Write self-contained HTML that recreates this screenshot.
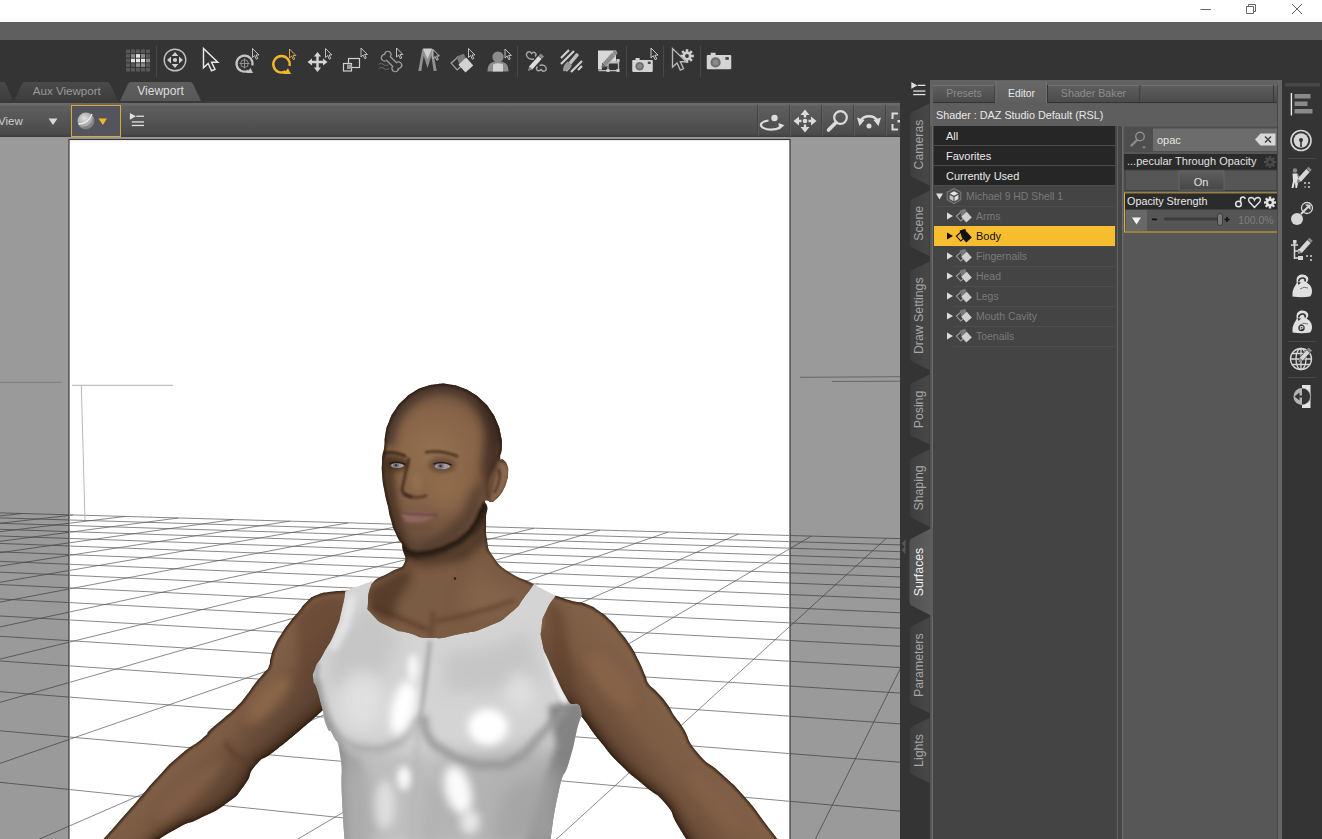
<!DOCTYPE html>
<html><head><meta charset="utf-8"><title>DAZ Studio</title>
<style>
*{box-sizing:border-box;margin:0;padding:0}
html,body{width:1322px;height:839px;overflow:hidden;background:#343434;font-family:"Liberation Sans",sans-serif;font-size:11px;color:#ddd}
.abs{position:absolute}
#titlebar{left:0;top:0;width:1322px;height:22px;background:#fff}
#menuband{left:0;top:22px;width:1322px;height:18px;background:#5f5f5f}
#toolbar{left:0;top:40px;width:1322px;height:61px;background:#343434}
#vp{left:0;top:101px;width:900px;height:738px;background:#9a9a9a;overflow:hidden}
#vptool{left:0;top:0;width:900px;height:36px;background:linear-gradient(#3a3a3a 0,#3a3a3a 1.8px,#6a6a6a 2.4px,#666 4.5px,#5e5e5e 5.5px,#4b4b4b 33px,#3e3e3e 35.5px,#3e3e3e 36px)}
#tabsrow{left:0;top:81px;width:900px;height:20px;overflow:hidden}
#rightdark{left:900px;top:80px;width:30px;height:759px;background:#343434;overflow:visible;z-index:3}
#panel{left:929px;top:80px;width:353px;height:759px;background:#666}
#rtool{left:1282px;top:80px;width:40px;height:759px;background:#343434}
.vt{position:absolute;transform-origin:0 0;transform:rotate(-90deg);font-size:11px;color:#aaa;white-space:nowrap;letter-spacing:.4px}
.row{position:absolute;left:934px;width:181px;height:19px;line-height:19px;background:#262626;color:#e6e6e6;padding-left:12px;font-size:11px}
.trow{position:absolute;left:934px;width:181px;height:20px;line-height:20px;color:#7c7c7c;font-size:11px;border-bottom:1px solid #555}
</style></head><body>
<div id="titlebar" class="abs"><svg class="abs" style="left:1180px;top:0" width="142" height="22" viewBox="1180 0 142 22" fill="none" stroke="#666" stroke-width="1"><path d="M1200.5 9.5H1211"/><path d="M1246.5 6.5h7v7h-7z M1248.5 6.5v-2h7v7h-2"/><path d="M1292 4l10 10M1302 4l-10 10"/></svg></div>
<div id="menuband" class="abs"></div>
<div id="toolbar" class="abs"><svg class="abs" style="left:0;top:0" width="760" height="61" viewBox="0 40 760 61"><rect x="126.0" y="49.5" width="4" height="3.6" fill="#585858"/><rect x="131.0" y="49.5" width="4" height="3.6" fill="#585858"/><rect x="136.0" y="49.5" width="4" height="3.6" fill="#585858"/><rect x="141.0" y="49.5" width="4" height="3.6" fill="#585858"/><rect x="146.0" y="49.5" width="4" height="3.6" fill="#585858"/><rect x="126.0" y="54.1" width="4" height="3.6" fill="#585858"/><rect x="131.0" y="54.1" width="4" height="3.6" fill="#8a8a8a"/><rect x="136.0" y="54.1" width="4" height="3.6" fill="#e4e4e4"/><rect x="141.0" y="54.1" width="4" height="3.6" fill="#8a8a8a"/><rect x="146.0" y="54.1" width="4" height="3.6" fill="#585858"/><rect x="126.0" y="58.7" width="4" height="3.6" fill="#585858"/><rect x="131.0" y="58.7" width="4" height="3.6" fill="#e4e4e4"/><rect x="136.0" y="58.7" width="4" height="3.6" fill="#e4e4e4"/><rect x="141.0" y="58.7" width="4" height="3.6" fill="#e4e4e4"/><rect x="146.0" y="58.7" width="4" height="3.6" fill="#8a8a8a"/><rect x="126.0" y="63.3" width="4" height="3.6" fill="#585858"/><rect x="131.0" y="63.3" width="4" height="3.6" fill="#585858"/><rect x="136.0" y="63.3" width="4" height="3.6" fill="#8a8a8a"/><rect x="141.0" y="63.3" width="4" height="3.6" fill="#8a8a8a"/><rect x="146.0" y="63.3" width="4" height="3.6" fill="#585858"/><rect x="126.0" y="67.9" width="4" height="3.6" fill="#585858"/><rect x="131.0" y="67.9" width="4" height="3.6" fill="#585858"/><rect x="136.0" y="67.9" width="4" height="3.6" fill="#585858"/><rect x="141.0" y="67.9" width="4" height="3.6" fill="#585858"/><rect x="146.0" y="67.9" width="4" height="3.6" fill="#585858"/><line x1="156.5" y1="46" x2="156.5" y2="77" stroke="#484848"/><line x1="517.5" y1="46" x2="517.5" y2="77" stroke="#484848"/><line x1="626.5" y1="46" x2="626.5" y2="77" stroke="#484848"/><line x1="663.5" y1="46" x2="663.5" y2="77" stroke="#484848"/><line x1="700.5" y1="46" x2="700.5" y2="77" stroke="#484848"/><g transform="translate(175 60)" fill="#d0d0d0"><circle r="10.8" fill="none" stroke="#c0c0c0" stroke-width="1.4"/><circle r="2.1"/><path d="M0 -8L3.4 -4H-3.4Z M0 8L3.4 4H-3.4Z M-8 0L-4 -3.4V3.4Z M8 0L4 -3.4V3.4Z"/></g><g transform="translate(203.5 48.5) scale(1.55)"><path d="M0 0 L0 12.5 L3 9.6 L5.2 14.4 L7.4 13.4 L5.2 8.8 L9.2 8.8 Z" fill="#343434" stroke="#e6e6e6" stroke-width=".95"/></g><g transform="translate(244.5 63.5)" fill="none" stroke="#c4c4c4"><path d="M3.8 7.2A8 8 0 1 1 7.8 2" stroke-width="2.2"/><path d="M1.5 9.5L8.500 9.5L6 4.5Z" fill="#c4c4c4" stroke="none"/><circle r="3.8" stroke-width=".9" stroke="#9a9a9a"/><path d="M0 -5V5M-5 0H5" stroke-width=".9" stroke="#9a9a9a"/></g><g transform="translate(252.5 48.5) scale(0.82)"><path d="M0 0 L0 11 L2.6 8.6 L4.6 13 L6.4 12.2 L4.4 7.9 L7.8 7.9 Z" fill="#343434" stroke="#ddd" stroke-width="1" stroke-linejoin="miter"/></g><g transform="translate(281.5 64)" fill="none" stroke="#f2b62c"><path d="M4 7.400A8.2 8.2 0 1 1 8 2" stroke-width="2.4"/><path d="M1.500 10L9.500 10L6.500 4.300Z" fill="#f2b62c" stroke="none"/></g><g transform="translate(289.5 49) scale(0.82)"><path d="M0 0 L0 11 L2.6 8.6 L4.6 13 L6.4 12.2 L4.4 7.9 L7.8 7.9 Z" fill="#343434" stroke="#f0c050" stroke-width="1" stroke-linejoin="miter"/></g><g transform="translate(317.5 62)" fill="#d6d6d6"><path d="M-1.2 -6H1.2V6H-1.2Z M-6 -1.2H6V1.2H-6Z"/><path d="M0 -10L3.600 -5.500H-3.600Z M0 10L3.600 5.500H-3.600Z M-10 0L-5.500 -3.600V3.600Z M10 0L5.500 -3.600V3.600Z"/></g><g transform="translate(325.5 48.5) scale(0.82)"><path d="M0 0 L0 11 L2.6 8.6 L4.6 13 L6.4 12.2 L4.4 7.9 L7.8 7.9 Z" fill="#343434" stroke="#ddd" stroke-width="1" stroke-linejoin="miter"/></g><g fill="none" stroke="#d0d0d0" stroke-width="1.2"><rect x="348.5" y="58.5" width="11" height="9"/><rect x="343.5" y="63.5" width="8" height="7.5" fill="#343434"/><rect x="347" y="64.5" width="4.5" height="4.5" fill="#9a9a9a" stroke="none"/></g><g transform="translate(361 48) scale(0.82)"><path d="M0 0 L0 11 L2.6 8.6 L4.6 13 L6.4 12.2 L4.4 7.9 L7.8 7.9 Z" fill="#343434" stroke="#ddd" stroke-width="1" stroke-linejoin="miter"/></g><g transform="translate(391.500 61.500) rotate(45)"><g fill="none" stroke="#9c9c9c" stroke-width="2.600"><circle cx="-7.500" cy="-2.300" r="2.600"/><circle cx="-7.500" cy="2.300" r="2.600"/><circle cx="7.500" cy="-2.300" r="2.600"/><circle cx="7.500" cy="2.300" r="2.600"/><rect x="-7" y="-2" width="14" height="4"/></g><g fill="#343434"><circle cx="-7.500" cy="-2.300" r="2.600"/><circle cx="-7.500" cy="2.300" r="2.600"/><circle cx="7.500" cy="-2.300" r="2.600"/><circle cx="7.500" cy="2.300" r="2.600"/><rect x="-7" y="-2" width="14" height="4"/></g></g><path d="M378.500 64.500q2.500 -2 5 0t5 0M379 68.500q2.500 -2 5 0t5 0" fill="none" stroke="#606060" stroke-width="1.100"/><g transform="translate(396.5 48) scale(0.82)"><path d="M0 0 L0 11 L2.6 8.6 L4.6 13 L6.4 12.2 L4.4 7.9 L7.8 7.9 Z" fill="#343434" stroke="#ddd" stroke-width="1" stroke-linejoin="miter"/></g><path d="M418.300 71L422.300 49H424.800L427.500 60L430.200 49H432.700L436.700 71H433.700L431.300 56L427.500 68L423.700 56L421.300 71Z" fill="#909090"/><path d="M423 48.500H432L427.500 59.500Z" fill="#cdcdcd"/><g transform="translate(433 49.5) scale(0.82)"><path d="M0 0 L0 11 L2.6 8.6 L4.6 13 L6.4 12.2 L4.4 7.9 L7.8 7.9 Z" fill="#343434" stroke="#ddd" stroke-width="1" stroke-linejoin="miter"/></g><g transform="translate(462 63)"><rect x="-9" y="-4" width="9" height="9" transform="rotate(-42 -4.5 .5)" fill="#343434" stroke="#a0a0a0" stroke-width="1.3"/><rect x="-3" y="-8" width="8" height="8" transform="rotate(-20)" fill="#7c7c7c"/><rect x="-1.500" y="-3" width="10.5" height="10.5" transform="rotate(-42 3.5 2)" fill="#d2d2d2"/></g><g transform="translate(468.5 48.5) scale(0.82)"><path d="M0 0 L0 11 L2.6 8.6 L4.6 13 L6.4 12.2 L4.4 7.9 L7.8 7.9 Z" fill="#343434" stroke="#ddd" stroke-width="1" stroke-linejoin="miter"/></g><g transform="translate(498 62)"><circle cx="0" cy="-5" r="5.6" fill="#8c8c8c"/><path d="M-10.500 9.500C-10.500 1 -6 -.5 0 -.5C6 -.5 10.500 1 10.500 9.500Z" fill="#8c8c8c"/><path d="M-5 9.500V2.500Q0 0 5 2.500V9.500Z" fill="#d2d2d2"/></g><g transform="translate(505 49) scale(0.82)"><path d="M0 0 L0 11 L2.6 8.6 L4.6 13 L6.4 12.2 L4.4 7.9 L7.8 7.9 Z" fill="#343434" stroke="#ddd" stroke-width="1" stroke-linejoin="miter"/></g><g transform="translate(536 62)" fill="none" stroke="#a8a8a8" stroke-width="1.4"><path d="M-9 -5.500C-11 -10 -6 -11.500 -4.500 -8.500C-1.500 -11.500 1.500 -8 -1 -5.500M9.500 4.500C12 9 7 10.500 5 7.500C2 10.500 -1 7.500 1.500 4.500"/><path d="M-9 -5.500Q-7 -2 -2 -3M9.500 4.500Q7 2 3.500 3.500"/></g><g transform="translate(536 62) rotate(-48)"><rect x="-8" y="-2.200" width="14" height="4.400" fill="#dcdcdc"/><path d="M-8 -2.200L-12 0L-8 2.200Z" fill="#8a8a8a"/><rect x="6.500" y="-2.200" width="3" height="4.400" fill="#8a8a8a"/></g><g stroke="#cfcfcf" stroke-width="2.200"><path d="M561 58L569 50M561 64L574 51M578 70L582 66M571 72L582 61M566 71L570 67"/></g><g transform="translate(571 62) rotate(-50)"><path d="M-2 -1.800H10Q12 0 10 1.800H-2Z" fill="#bdbdbd"/><path d="M-2 -3Q-9 -4 -12 0Q-9 4 -2 3Z" fill="#9a9a9a"/></g><g><rect x="598" y="50.500" width="18" height="19" fill="#d8d8d8"/><path d="M598.500 70.500H618.500V60M608 70.500V62H618.500" fill="none" stroke="#bdbdbd" stroke-width="1.300"/><rect x="602" y="63" width="15" height="7" fill="#343434"/><path d="M608 71V63H618" fill="none" stroke="#bdbdbd" stroke-width="1.200"/><rect x="606.500" y="69" width="3" height="3" fill="#ccc"/><rect x="616.500" y="69" width="3" height="3" fill="#ccc"/><rect x="616.500" y="59" width="3" height="3" fill="#ccc"/></g><g transform="translate(609 59.500) rotate(-48)"><rect x="-7" y="-2.600" width="14" height="5.200" fill="#8c8c8c" stroke="#d8d8d8" stroke-width=".6"/><path d="M-7 -2.600L-11.500 0L-7 2.600Z" fill="#6a6a6a"/><circle cx="9" cy="0" r="2.400" fill="#8c8c8c"/></g><g transform="translate(642.5 64.5) scale(0.82)"><path d="M-11.500 -5.500H-8.500V-8H-3.500V-5.500H11.500Q12.500 -5.500 12.500 -4.500V8Q12.500 9 11.500 9H-11.500Q-12.500 9 -12.500 8V-4.500Q-12.500 -5.500 -11.500 -5.500Z" fill="#d4d4d4"/><circle cx="-3.500" cy="2" r="5.200" fill="#6e6e6e"/><circle cx="-3.500" cy="2" r="3" fill="#8a8a8a"/><rect x="6.500" y="-3.500" width="3.500" height="2.800" fill="#444"/></g><g transform="translate(651 48) scale(0.9)"><path d="M0 0 L0 11 L2.6 8.6 L4.6 13 L6.4 12.2 L4.4 7.9 L7.8 7.9 Z" fill="#343434" stroke="#ddd" stroke-width="1" stroke-linejoin="miter"/></g><g transform="translate(687 56)" fill="#cfcfcf"><circle r="4.400"/><rect x="-1.300" y="-6.800" width="2.600" height="3" transform="rotate(0)"/><rect x="-1.300" y="-6.800" width="2.600" height="3" transform="rotate(45)"/><rect x="-1.300" y="-6.800" width="2.600" height="3" transform="rotate(90)"/><rect x="-1.300" y="-6.800" width="2.600" height="3" transform="rotate(135)"/><rect x="-1.300" y="-6.800" width="2.600" height="3" transform="rotate(180)"/><rect x="-1.300" y="-6.800" width="2.600" height="3" transform="rotate(225)"/><rect x="-1.300" y="-6.800" width="2.600" height="3" transform="rotate(270)"/><rect x="-1.300" y="-6.800" width="2.600" height="3" transform="rotate(315)"/><circle r="1.900" fill="#343434"/></g><g transform="translate(672.500 48.500) scale(1.500)"><path d="M0 0 L0 12.500 L3 9.600 L5.200 14.400 L7.400 13.400 L5.200 8.800 L9.200 8.800 Z" fill="#343434" stroke="#b8b8b8" stroke-width=".9"/></g><g transform="translate(719 60.5) scale(0.98)"><path d="M-11.500 -5.500H-8.500V-8H-3.500V-5.500H11.500Q12.500 -5.500 12.500 -4.500V8Q12.500 9 11.500 9H-11.500Q-12.500 9 -12.500 8V-4.500Q-12.500 -5.500 -11.500 -5.500Z" fill="#d4d4d4"/><circle cx="-3.500" cy="2" r="5.200" fill="#6e6e6e"/><circle cx="-3.500" cy="2" r="3" fill="#8a8a8a"/><rect x="6.500" y="-3.500" width="3.500" height="2.800" fill="#444"/></g></svg></div>
<div id="tabsrow" class="abs"><svg class="abs" style="left:0;top:0" width="900" height="20" viewBox="0 81 900 20"><defs><linearGradient id="tg1" x1="0" y1="0" x2="0" y2="1"><stop offset="0" stop-color="#4a4a4a"/><stop offset="1" stop-color="#3c3c3c"/></linearGradient><linearGradient id="tg2" x1="0" y1="0" x2="0" y2="1"><stop offset="0" stop-color="#5e5e5e"/><stop offset="1" stop-color="#585858"/></linearGradient></defs><path d="M-20 101L-12 84Q-11 82 -9 82H3Q5 82 6 84L13 101Z" fill="url(#tg1)"/><path d="M14 101L22 84Q23 82 25 82H107Q109 82 110 84L118 101Z" fill="url(#tg1)"/><path d="M120 101L128 84Q129 82 131 82H190Q192 82 193 84L201 101Z" fill="url(#tg2)"/><text x="66.800" y="95" font-size="11.6" fill="#9a9a9a" text-anchor="middle" font-family="Liberation Sans, sans-serif">Aux Viewport</text><text x="160.500" y="95" font-size="12" fill="#dcdcdc" text-anchor="middle" font-family="Liberation Sans, sans-serif">Viewport</text></svg></div>
<div id="vp" class="abs">
<svg class="abs" style="left:0;top:0" width="900" height="738" viewBox="0 101 900 738">
<g stroke="#4a4a4a" stroke-width="1" stroke-opacity=".8" fill="none"><line x1="-253.6" y1="505.6" x2="1397.8" y2="552.9"/>
<line x1="-296.6" y1="509.0" x2="1416.4" y2="560.4"/>
<line x1="-342.6" y1="512.5" x2="1437.1" y2="568.6"/>
<line x1="-391.9" y1="516.3" x2="1460.1" y2="577.8"/>
<line x1="-444.9" y1="520.4" x2="1485.9" y2="588.1"/>
<line x1="-502.0" y1="524.8" x2="1515.0" y2="599.7"/>
<line x1="-563.7" y1="529.6" x2="1548.0" y2="613.0"/>
<line x1="-630.5" y1="534.8" x2="1585.9" y2="628.1"/>
<line x1="-703.2" y1="540.4" x2="1629.8" y2="645.7"/>
<line x1="-782.6" y1="546.5" x2="1681.2" y2="666.2"/>
<line x1="-869.5" y1="553.2" x2="1742.3" y2="690.6"/>
<line x1="-965.2" y1="560.6" x2="1816.1" y2="720.1"/>
<line x1="-1071.1" y1="568.8" x2="1907.0" y2="756.5"/>
<line x1="-1188.8" y1="577.9" x2="2021.6" y2="802.3"/>
<line x1="-1320.5" y1="588.1" x2="2170.7" y2="861.9"/>
<line x1="-1468.8" y1="599.6" x2="2372.8" y2="942.7"/>
<line x1="-1637.0" y1="612.6" x2="2662.0" y2="1058.3"/>
<line x1="-1829.5" y1="627.5" x2="3110.0" y2="1237.4"/>
<line x1="-2052.0" y1="644.7" x2="3897.4" y2="1552.2"/>
<line x1="-2312.0" y1="664.8" x2="5645.0" y2="2250.8"/>
<line x1="-2619.9" y1="688.6" x2="5904.7" y2="3136.8"/>
<line x1="-2990.2" y1="717.2" x2="1737.0" y2="3140.3"/>
<line x1="-3444.2" y1="752.3" x2="-2430.8" y2="3143.8"/>
<line x1="-4013.6" y1="796.3" x2="-6598.5" y2="3147.2"/>
<line x1="-4749.2" y1="853.2" x2="-10766.2" y2="3150.7"/>
<line x1="-253.6" y1="505.6" x2="-4749.2" y2="853.2"/>
<line x1="-210.6" y1="506.9" x2="-4819.7" y2="880.1"/>
<line x1="-166.4" y1="508.1" x2="-4899.3" y2="910.5"/>
<line x1="-121.1" y1="509.4" x2="-4990.0" y2="945.1"/>
<line x1="-74.6" y1="510.8" x2="-5094.2" y2="984.9"/>
<line x1="-26.7" y1="512.1" x2="-5215.0" y2="1031.0"/>
<line x1="22.4" y1="513.5" x2="-5357.0" y2="1085.3"/>
<line x1="72.9" y1="515.0" x2="-5526.2" y2="1149.8"/>
<line x1="124.8" y1="516.5" x2="-5731.1" y2="1228.1"/>
<line x1="178.2" y1="518.0" x2="-5984.6" y2="1324.9"/>
<line x1="233.2" y1="519.6" x2="-6306.1" y2="1447.7"/>
<line x1="289.8" y1="521.2" x2="-6727.3" y2="1608.5"/>
<line x1="348.1" y1="522.9" x2="-7303.0" y2="1828.3"/>
<line x1="408.2" y1="524.6" x2="-8137.3" y2="2146.9"/>
<line x1="470.2" y1="526.3" x2="-9455.3" y2="2650.2"/>
<line x1="534.1" y1="528.2" x2="-10160.8" y2="3150.2"/>
<line x1="600.1" y1="530.1" x2="-8522.8" y2="3148.9"/>
<line x1="668.2" y1="532.0" x2="-6884.8" y2="3147.5"/>
<line x1="738.5" y1="534.0" x2="-5246.8" y2="3146.1"/>
<line x1="811.2" y1="536.1" x2="-3608.8" y2="3144.7"/>
<line x1="886.4" y1="538.3" x2="-1970.8" y2="3143.4"/>
<line x1="964.2" y1="540.5" x2="-332.8" y2="3142.0"/>
<line x1="1044.8" y1="542.8" x2="1305.2" y2="3140.6"/>
<line x1="1128.3" y1="545.2" x2="2943.2" y2="3139.3"/>
<line x1="1214.8" y1="547.7" x2="4581.2" y2="3137.9"/>
<line x1="1304.6" y1="550.2" x2="6219.2" y2="3136.5"/>
<line x1="1397.8" y1="552.9" x2="7857.2" y2="3135.1"/></g>
<line x1="0" y1="382.3" x2="62" y2="382.3" stroke="#7c7c7c" stroke-width="1"/>
<line x1="800" y1="377.3" x2="900" y2="376.7" stroke="#666" stroke-width="1"/>
<line x1="832" y1="381.5" x2="900" y2="381.2" stroke="#666" stroke-width="1"/>
<rect x="69" y="139.5" width="721" height="720" fill="#fff" stroke="#3a3a3a" stroke-width="1.2"/>
<clipPath id="fr"><rect x="70" y="140" width="719" height="700"/></clipPath>
<g clip-path="url(#fr)">
<g stroke="#5a5a5a" stroke-width=".9" stroke-opacity=".8" fill="none"><line x1="-253.6" y1="505.6" x2="1397.8" y2="552.9"/>
<line x1="-296.6" y1="509.0" x2="1416.4" y2="560.4"/>
<line x1="-342.6" y1="512.5" x2="1437.1" y2="568.6"/>
<line x1="-391.9" y1="516.3" x2="1460.1" y2="577.8"/>
<line x1="-444.9" y1="520.4" x2="1485.9" y2="588.1"/>
<line x1="-502.0" y1="524.8" x2="1515.0" y2="599.7"/>
<line x1="-563.7" y1="529.6" x2="1548.0" y2="613.0"/>
<line x1="-630.5" y1="534.8" x2="1585.9" y2="628.1"/>
<line x1="-703.2" y1="540.4" x2="1629.8" y2="645.7"/>
<line x1="-782.6" y1="546.5" x2="1681.2" y2="666.2"/>
<line x1="-869.5" y1="553.2" x2="1742.3" y2="690.6"/>
<line x1="-965.2" y1="560.6" x2="1816.1" y2="720.1"/>
<line x1="-1071.1" y1="568.8" x2="1907.0" y2="756.5"/>
<line x1="-1188.8" y1="577.9" x2="2021.6" y2="802.3"/>
<line x1="-1320.5" y1="588.1" x2="2170.7" y2="861.9"/>
<line x1="-1468.8" y1="599.6" x2="2372.8" y2="942.7"/>
<line x1="-1637.0" y1="612.6" x2="2662.0" y2="1058.3"/>
<line x1="-1829.5" y1="627.5" x2="3110.0" y2="1237.4"/>
<line x1="-2052.0" y1="644.7" x2="3897.4" y2="1552.2"/>
<line x1="-2312.0" y1="664.8" x2="5645.0" y2="2250.8"/>
<line x1="-2619.9" y1="688.6" x2="5904.7" y2="3136.8"/>
<line x1="-2990.2" y1="717.2" x2="1737.0" y2="3140.3"/>
<line x1="-3444.2" y1="752.3" x2="-2430.8" y2="3143.8"/>
<line x1="-4013.6" y1="796.3" x2="-6598.5" y2="3147.2"/>
<line x1="-4749.2" y1="853.2" x2="-10766.2" y2="3150.7"/>
<line x1="-253.6" y1="505.6" x2="-4749.2" y2="853.2"/>
<line x1="-210.6" y1="506.9" x2="-4819.7" y2="880.1"/>
<line x1="-166.4" y1="508.1" x2="-4899.3" y2="910.5"/>
<line x1="-121.1" y1="509.4" x2="-4990.0" y2="945.1"/>
<line x1="-74.6" y1="510.8" x2="-5094.2" y2="984.9"/>
<line x1="-26.7" y1="512.1" x2="-5215.0" y2="1031.0"/>
<line x1="22.4" y1="513.5" x2="-5357.0" y2="1085.3"/>
<line x1="72.9" y1="515.0" x2="-5526.2" y2="1149.8"/>
<line x1="124.8" y1="516.5" x2="-5731.1" y2="1228.1"/>
<line x1="178.2" y1="518.0" x2="-5984.6" y2="1324.9"/>
<line x1="233.2" y1="519.6" x2="-6306.1" y2="1447.7"/>
<line x1="289.8" y1="521.2" x2="-6727.3" y2="1608.5"/>
<line x1="348.1" y1="522.9" x2="-7303.0" y2="1828.3"/>
<line x1="408.2" y1="524.6" x2="-8137.3" y2="2146.9"/>
<line x1="470.2" y1="526.3" x2="-9455.3" y2="2650.2"/>
<line x1="534.1" y1="528.2" x2="-10160.8" y2="3150.2"/>
<line x1="600.1" y1="530.1" x2="-8522.8" y2="3148.9"/>
<line x1="668.2" y1="532.0" x2="-6884.8" y2="3147.5"/>
<line x1="738.5" y1="534.0" x2="-5246.8" y2="3146.1"/>
<line x1="811.2" y1="536.1" x2="-3608.8" y2="3144.7"/>
<line x1="886.4" y1="538.3" x2="-1970.8" y2="3143.4"/>
<line x1="964.2" y1="540.5" x2="-332.8" y2="3142.0"/>
<line x1="1044.8" y1="542.8" x2="1305.2" y2="3140.6"/>
<line x1="1128.3" y1="545.2" x2="2943.2" y2="3139.3"/>
<line x1="1214.8" y1="547.7" x2="4581.2" y2="3137.9"/>
<line x1="1304.6" y1="550.2" x2="6219.2" y2="3136.5"/>
<line x1="1397.8" y1="552.9" x2="7857.2" y2="3135.1"/></g>
<line x1="72" y1="385.3" x2="173" y2="385.3" stroke="#b0b0b0" stroke-width="1"/>
<line x1="81.3" y1="385.3" x2="85" y2="520" stroke="#b8b8b8" stroke-width="1"/>
<defs>
<filter id="b1" filterUnits="userSpaceOnUse" x="60" y="360" width="740" height="500"><feGaussianBlur stdDeviation="1"/></filter>
<filter id="b2" filterUnits="userSpaceOnUse" x="60" y="360" width="740" height="500"><feGaussianBlur stdDeviation="2"/></filter>
<filter id="b3" filterUnits="userSpaceOnUse" x="60" y="360" width="740" height="500"><feGaussianBlur stdDeviation="3.5"/></filter>
<filter id="b5" filterUnits="userSpaceOnUse" x="60" y="360" width="740" height="500"><feGaussianBlur stdDeviation="5"/></filter>
<filter id="b8" filterUnits="userSpaceOnUse" x="60" y="360" width="740" height="500"><feGaussianBlur stdDeviation="8"/></filter>
<filter id="b12" filterUnits="userSpaceOnUse" x="60" y="360" width="740" height="500"><feGaussianBlur stdDeviation="12"/></filter>
<clipPath id="cLarm"><path d="M350.0 590.5C347.8 590.6 350.1 590.4 343.5 590.8C336.9 591.2 339.0 590.3 330.1 591.7C321.2 593.1 324.6 591.7 316.8 595.0C309.0 598.3 312.9 596.1 306.8 601.7C300.7 607.3 304.0 605.0 298.4 611.7C292.8 618.4 295.7 614.5 290.1 621.7C284.5 628.9 286.7 625.6 281.7 633.4C276.7 641.2 278.7 637.2 275.1 645.0C271.5 652.8 273.0 649.5 270.9 656.7C268.8 663.9 271.2 661.1 268.7 666.7C266.2 672.3 268.0 667.8 263.4 673.4C258.8 679.0 260.6 676.2 255.0 683.4C249.4 690.6 252.8 687.3 246.7 695.1C240.6 702.9 244.5 699.0 236.7 706.8C228.9 714.6 232.3 710.8 223.4 718.5C214.5 726.2 217.0 723.4 210.0 730.0C203.0 736.6 212.8 729.7 202.4 738.4C192.0 747.1 193.5 743.3 178.7 756.2C163.9 769.1 171.7 762.2 157.9 777.0C144.1 791.8 151.0 784.9 137.2 800.7C123.4 816.5 129.5 809.6 116.4 824.4C103.3 839.2 104.1 838.1 98.0 845.0C115.3 845.0 132.7 845.0 150.0 845.0C159.6 839.1 162.2 836.2 178.7 827.4C195.2 818.6 183.7 826.4 199.5 818.5C215.3 810.6 211.4 814.5 226.2 803.6C241.0 792.7 234.1 798.6 244.0 785.8C253.9 773.0 245.9 776.5 255.8 765.1C265.7 753.7 259.7 762.6 273.6 751.7C287.5 740.8 281.6 745.7 297.4 732.4C313.2 719.1 308.2 723.2 321.1 711.7C334.0 700.2 331.0 702.6 336.0 698.0C341.3 695.3 346.7 692.7 352.0 690.0C352.0 658.7 352.0 627.3 352.0 596.0C351.3 594.2 350.7 592.3 350.0 590.5Z"/></clipPath>
<clipPath id="cRarm"><path d="M546.0 593.5C549.3 594.3 547.3 593.4 555.9 595.8C564.5 598.2 561.4 598.0 571.7 600.8C582.0 603.6 577.2 600.6 586.7 604.2C596.2 607.8 592.3 606.4 600.1 611.7C607.9 617.0 603.4 613.3 610.1 620.0C616.8 626.7 613.4 623.3 620.1 631.7C626.8 640.1 624.0 635.6 630.1 645.1C636.2 654.6 633.4 650.1 638.4 660.1C643.4 670.1 641.7 667.3 645.1 675.1C648.5 682.9 644.6 677.8 648.5 683.4C652.4 689.0 650.7 685.1 656.8 691.8C662.9 698.5 660.7 695.2 666.8 703.5C672.9 711.8 669.6 708.6 675.1 716.8C680.6 725.0 675.6 715.9 683.2 728.0C690.8 740.1 685.1 737.9 698.0 753.2C710.9 768.5 706.0 759.2 721.8 774.0C737.6 788.8 730.7 780.9 745.5 797.7C760.3 814.5 754.1 808.6 766.3 824.4C778.5 840.2 776.8 838.1 782.0 845.0C751.3 845.0 720.7 845.0 690.0 845.0C685.8 838.1 685.5 838.2 677.3 824.4C669.1 810.6 676.3 816.5 665.4 803.6C654.5 790.7 659.4 798.6 644.6 785.8C629.8 773.0 635.7 779.9 620.9 765.1C606.1 750.3 613.0 757.1 600.1 741.3C587.2 725.5 592.3 730.2 582.3 717.6C572.3 705.0 580.1 713.4 570.0 703.5C559.9 693.6 558.0 693.2 552.0 688.0C548.0 675.3 544.0 662.7 540.0 650.0C540.0 632.0 540.0 614.0 540.0 596.0C542.0 595.2 544.0 594.3 546.0 593.5Z"/></clipPath>
<clipPath id="cNeck"><path d="M400.0 520.0C392.5 532.0 400.8 533.6 402.0 545.0C403.2 556.4 407.4 555.6 404.4 562.7C401.4 569.8 399.2 566.7 390.8 571.8C382.4 576.9 379.3 576.1 373.0 582.0C366.7 587.9 369.9 578.5 367.0 594.0C364.1 609.5 345.2 625.1 362.0 640.0C378.8 654.9 384.7 650.0 430.0 650.0C475.3 650.0 503.7 656.0 532.0 640.0C560.3 624.0 535.5 604.9 536.0 590.0C536.5 575.1 541.0 589.1 533.7 584.2C526.4 579.3 519.7 579.3 508.8 571.8C497.9 564.3 498.7 564.4 492.9 555.9C487.1 547.4 488.8 549.6 487.0 540.0C485.2 530.4 486.4 529.9 486.0 520.0C485.6 510.1 489.8 509.7 485.5 503.0C481.2 496.3 484.8 495.8 470.0 495.0C455.2 494.2 448.7 493.3 430.0 500.0C411.3 506.7 407.5 508.0 400.0 520.0Z"/></clipPath>
<clipPath id="cShirt"><path d="M372.6 580.8C371.1 587.6 368.0 589.9 368.0 601.3C368.0 612.7 365.0 606.2 372.6 614.9C380.2 623.6 378.7 621.4 390.8 627.4C402.9 633.4 395.7 629.5 408.9 633.0C422.1 636.5 413.9 637.6 430.5 638.0C447.1 638.4 439.5 638.1 458.8 634.2C478.1 630.3 470.9 633.4 488.3 626.2C505.7 619.0 498.9 622.4 511.0 612.6C523.1 602.8 517.0 606.2 524.6 596.7C532.2 587.2 530.7 588.4 533.7 584.2C541.1 588.1 548.5 591.9 555.9 595.8C552.8 600.5 551.4 599.7 546.7 610.0C542.0 620.3 543.1 615.6 541.7 626.7C540.3 637.8 540.3 632.3 542.5 643.4C544.7 654.5 543.7 648.4 548.4 660.1C553.1 671.8 551.2 666.7 556.7 678.4C562.2 690.1 560.6 686.7 565.0 695.1C569.4 703.5 568.3 700.7 570.0 703.5C573.6 705.5 578.7 699.9 580.8 709.5C582.9 719.1 580.3 714.9 576.4 732.4C572.5 749.9 574.9 742.3 569.0 762.1C563.1 781.9 565.0 764.2 558.6 791.8C552.2 819.4 552.7 827.3 549.7 845.0C481.5 845.0 413.2 845.0 345.0 845.0C344.0 829.2 343.5 827.3 342.0 797.7C340.5 768.1 343.4 777.0 340.4 756.2C337.4 735.4 337.5 745.2 333.0 735.4C328.5 725.6 330.5 736.3 326.8 726.8C323.1 717.3 325.1 719.6 321.8 706.8C318.5 694.0 319.6 697.3 316.8 688.4C314.0 679.5 314.0 686.7 313.4 680.0C312.8 673.3 311.7 677.3 315.1 668.4C318.5 659.5 316.8 665.6 323.5 653.4C330.2 641.2 329.0 646.2 335.1 631.7C341.2 617.2 338.4 623.6 341.8 610.0C345.2 596.4 344.2 597.3 345.4 591.0C354.5 587.6 363.5 584.2 372.6 580.8Z"/></clipPath>
<clipPath id="cHead"><path d="M384.2 447.0C385.2 439.9 383.8 442.4 385.5 433.7C387.2 425.0 386.0 429.1 389.3 421.0C392.6 412.9 390.6 416.6 395.4 409.5C400.2 402.4 397.6 405.5 403.7 399.7C409.8 393.9 406.6 396.3 413.6 392.0C420.6 387.7 417.0 389.4 424.8 386.8C432.6 384.2 428.8 385.0 436.9 384.2C445.0 383.4 441.0 383.3 449.1 384.4C457.2 385.5 453.4 384.6 461.2 387.4C469.0 390.2 465.4 388.5 472.4 392.9C479.4 397.3 476.2 394.9 482.3 400.7C488.4 406.5 485.8 403.4 490.6 410.4C495.4 417.4 493.4 413.8 496.7 421.7C500.0 429.6 498.8 425.7 500.5 434.1C502.2 442.5 501.9 439.0 501.8 447.0C501.7 455.0 499.6 453.7 500.2 458.0C500.8 462.3 501.1 457.3 503.5 459.8C505.9 462.3 505.9 460.8 507.5 465.5C509.1 470.2 508.5 468.4 508.2 474.0C507.9 479.6 508.2 477.0 506.7 482.2C505.2 487.4 505.9 485.2 503.8 489.5C501.7 493.8 503.0 491.6 500.3 495.0C497.6 498.4 498.8 497.4 495.8 499.8C492.8 502.2 494.2 502.0 491.3 502.3C488.4 502.6 489.4 500.9 487.2 500.8C485.0 500.7 487.3 498.3 484.8 502.0C482.3 505.7 483.5 504.3 479.7 511.8C475.9 519.3 478.9 516.5 473.3 524.6C467.7 532.7 470.8 529.7 463.0 536.2C455.2 542.7 458.6 539.7 450.0 544.0C441.4 548.3 445.7 546.5 437.2 549.1C428.7 551.7 433.0 551.1 424.4 551.9C415.8 552.7 418.8 554.1 411.5 551.5C404.2 548.9 407.9 550.4 402.5 544.0C397.1 537.6 399.3 540.6 395.4 532.4C391.5 524.2 393.5 528.5 390.9 519.5C388.3 510.5 389.8 514.7 387.7 505.3C385.6 495.9 386.3 501.1 384.5 491.2C382.7 481.3 383.0 485.4 382.2 475.7C381.4 466.0 381.9 468.9 382.0 462.0C382.1 455.1 381.9 460.0 382.6 455.0C383.3 450.0 383.2 454.1 384.2 447.0Z"/></clipPath>
<linearGradient id="gL" gradientUnits="userSpaceOnUse" x1="215" y1="690" x2="275" y2="745"><stop offset="0" stop-color="#836249"/><stop offset=".45" stop-color="#7c5b43"/><stop offset="1" stop-color="#594030"/></linearGradient>
<linearGradient id="gR" gradientUnits="userSpaceOnUse" x1="665" y1="690" x2="600" y2="745"><stop offset="0" stop-color="#826148"/><stop offset=".5" stop-color="#7d5c44"/><stop offset="1" stop-color="#5c4231"/></linearGradient>
<radialGradient id="gH" gradientUnits="userSpaceOnUse" cx="436" cy="462" r="96" fx="432" fy="450"><stop offset="0" stop-color="#93704f"/><stop offset=".45" stop-color="#886549"/><stop offset=".75" stop-color="#745641"/><stop offset="1" stop-color="#574234"/></radialGradient>
</defs>
<g clip-path="url(#cLarm)"><path d="M350.0 590.5C347.8 590.6 350.1 590.4 343.5 590.8C336.9 591.2 339.0 590.3 330.1 591.7C321.2 593.1 324.6 591.7 316.8 595.0C309.0 598.3 312.9 596.1 306.8 601.7C300.7 607.3 304.0 605.0 298.4 611.7C292.8 618.4 295.7 614.5 290.1 621.7C284.5 628.9 286.7 625.6 281.7 633.4C276.7 641.2 278.7 637.2 275.1 645.0C271.5 652.8 273.0 649.5 270.9 656.7C268.8 663.9 271.2 661.1 268.7 666.7C266.2 672.3 268.0 667.8 263.4 673.4C258.8 679.0 260.6 676.2 255.0 683.4C249.4 690.6 252.8 687.3 246.7 695.1C240.6 702.9 244.5 699.0 236.7 706.8C228.9 714.6 232.3 710.8 223.4 718.5C214.5 726.2 217.0 723.4 210.0 730.0C203.0 736.6 212.8 729.7 202.4 738.4C192.0 747.1 193.5 743.3 178.7 756.2C163.9 769.1 171.7 762.2 157.9 777.0C144.1 791.8 151.0 784.9 137.2 800.7C123.4 816.5 129.5 809.6 116.4 824.4C103.3 839.2 104.1 838.1 98.0 845.0C115.3 845.0 132.7 845.0 150.0 845.0C159.6 839.1 162.2 836.2 178.7 827.4C195.2 818.6 183.7 826.4 199.5 818.5C215.3 810.6 211.4 814.5 226.2 803.6C241.0 792.7 234.1 798.6 244.0 785.8C253.9 773.0 245.9 776.5 255.8 765.1C265.7 753.7 259.7 762.6 273.6 751.7C287.5 740.8 281.6 745.7 297.4 732.4C313.2 719.1 308.2 723.2 321.1 711.7C334.0 700.2 331.0 702.6 336.0 698.0C341.3 695.3 346.7 692.7 352.0 690.0C352.0 658.7 352.0 627.3 352.0 596.0C351.3 594.2 350.7 592.3 350.0 590.5Z" fill="url(#gL)"/>
<path d="M150.0 845.0C159.6 839.1 162.2 836.2 178.7 827.4C195.2 818.6 183.7 826.4 199.5 818.5C215.3 810.6 211.4 814.5 226.2 803.6C241.0 792.7 234.1 798.6 244.0 785.8C253.9 773.0 245.9 776.5 255.8 765.1C265.7 753.7 259.7 762.6 273.6 751.7C287.5 740.8 281.6 745.7 297.4 732.4C313.2 719.1 308.2 723.2 321.1 711.7C334.0 700.2 331.0 702.6 336.0 698.0" fill="none" stroke="#3a2517" stroke-width="12" filter="url(#b3)" opacity=".75"/>
<path d="M350.0 590.5C347.8 590.6 350.1 590.4 343.5 590.8C336.9 591.2 339.0 590.3 330.1 591.7C321.2 593.1 324.6 591.7 316.8 595.0C309.0 598.3 312.9 596.1 306.8 601.7C300.7 607.3 304.0 605.0 298.4 611.7C292.8 618.4 295.7 614.5 290.1 621.7C284.5 628.9 286.7 625.6 281.7 633.4C276.7 641.2 278.7 637.2 275.1 645.0C271.5 652.8 273.0 649.5 270.9 656.7C268.8 663.9 271.2 661.1 268.7 666.7C266.2 672.3 268.0 667.8 263.4 673.4C258.8 679.0 260.6 676.2 255.0 683.4C249.4 690.6 252.8 687.3 246.7 695.1C240.6 702.9 244.5 699.0 236.7 706.8C228.9 714.6 232.3 710.8 223.4 718.5C214.5 726.2 217.0 723.4 210.0 730.0C203.0 736.6 212.8 729.7 202.4 738.4C192.0 747.1 193.5 743.3 178.7 756.2C163.9 769.1 171.7 762.2 157.9 777.0C144.1 791.8 151.0 784.9 137.2 800.7C123.4 816.5 129.5 809.6 116.4 824.4C103.3 839.2 104.1 838.1 98.0 845.0" fill="none" stroke="#2b1a10" stroke-width="4" filter="url(#b1)" opacity=".8"/>
<path d="M150.0 845.0C159.6 839.1 162.2 836.2 178.7 827.4C195.2 818.6 183.7 826.4 199.5 818.5C215.3 810.6 211.4 814.5 226.2 803.6C241.0 792.7 234.1 798.6 244.0 785.8C253.9 773.0 245.9 776.5 255.8 765.1C265.7 753.7 259.7 762.6 273.6 751.7C287.5 740.8 281.6 745.7 297.4 732.4C313.2 719.1 308.2 723.2 321.1 711.7C334.0 700.2 331.0 702.6 336.0 698.0" fill="none" stroke="#2b1a10" stroke-width="3" filter="url(#b1)" opacity=".8"/>
<path d="M296 612 L322 596 L348 598 L338 640 L318 682 L300 690 Z" fill="#5e412d" filter="url(#b5)" opacity=".55"/>
<ellipse cx="268" cy="700" rx="30" ry="10" fill="#8f6a4c" filter="url(#b5)" opacity=".8" transform="rotate(-48 268 700)"/>
<ellipse cx="190" cy="790" rx="45" ry="9" fill="#86624a" filter="url(#b5)" opacity=".7" transform="rotate(-42 190 790)"/>
<path d="M225 742 Q236 762 260 766" fill="none" stroke="#553a28" stroke-width="4" filter="url(#b2)" opacity=".6"/>
</g>
<g clip-path="url(#cRarm)"><path d="M546.0 593.5C549.3 594.3 547.3 593.4 555.9 595.8C564.5 598.2 561.4 598.0 571.7 600.8C582.0 603.6 577.2 600.6 586.7 604.2C596.2 607.8 592.3 606.4 600.1 611.7C607.9 617.0 603.4 613.3 610.1 620.0C616.8 626.7 613.4 623.3 620.1 631.7C626.8 640.1 624.0 635.6 630.1 645.1C636.2 654.6 633.4 650.1 638.4 660.1C643.4 670.1 641.7 667.3 645.1 675.1C648.5 682.9 644.6 677.8 648.5 683.4C652.4 689.0 650.7 685.1 656.8 691.8C662.9 698.5 660.7 695.2 666.8 703.5C672.9 711.8 669.6 708.6 675.1 716.8C680.6 725.0 675.6 715.9 683.2 728.0C690.8 740.1 685.1 737.9 698.0 753.2C710.9 768.5 706.0 759.2 721.8 774.0C737.6 788.8 730.7 780.9 745.5 797.7C760.3 814.5 754.1 808.6 766.3 824.4C778.5 840.2 776.8 838.1 782.0 845.0C751.3 845.0 720.7 845.0 690.0 845.0C685.8 838.1 685.5 838.2 677.3 824.4C669.1 810.6 676.3 816.5 665.4 803.6C654.5 790.7 659.4 798.6 644.6 785.8C629.8 773.0 635.7 779.9 620.9 765.1C606.1 750.3 613.0 757.1 600.1 741.3C587.2 725.5 592.3 730.2 582.3 717.6C572.3 705.0 580.1 713.4 570.0 703.5C559.9 693.6 558.0 693.2 552.0 688.0C548.0 675.3 544.0 662.7 540.0 650.0C540.0 632.0 540.0 614.0 540.0 596.0C542.0 595.2 544.0 594.3 546.0 593.5Z" fill="url(#gR)"/>
<path d="M690.0 845.0C685.8 838.1 685.5 838.2 677.3 824.4C669.1 810.6 676.3 816.5 665.4 803.6C654.5 790.7 659.4 798.6 644.6 785.8C629.8 773.0 635.7 779.9 620.9 765.1C606.1 750.3 613.0 757.1 600.1 741.3C587.2 725.5 592.3 730.2 582.3 717.6C572.3 705.0 580.1 713.4 570.0 703.5C559.9 693.6 558.0 693.2 552.0 688.0" fill="none" stroke="#3a2517" stroke-width="12" filter="url(#b3)" opacity=".7"/>
<path d="M546.0 593.5C549.3 594.3 547.3 593.4 555.9 595.8C564.5 598.2 561.4 598.0 571.7 600.8C582.0 603.6 577.2 600.6 586.7 604.2C596.2 607.8 592.3 606.4 600.1 611.7C607.9 617.0 603.4 613.3 610.1 620.0C616.8 626.7 613.4 623.3 620.1 631.7C626.8 640.1 624.0 635.6 630.1 645.1C636.2 654.6 633.4 650.1 638.4 660.1C643.4 670.1 641.7 667.3 645.1 675.1C648.5 682.9 644.6 677.8 648.5 683.4C652.4 689.0 650.7 685.1 656.8 691.8C662.9 698.5 660.7 695.2 666.8 703.5C672.9 711.8 669.6 708.6 675.1 716.8C680.6 725.0 675.6 715.9 683.2 728.0C690.8 740.1 685.1 737.9 698.0 753.2C710.9 768.5 706.0 759.2 721.8 774.0C737.6 788.8 730.7 780.9 745.5 797.7C760.3 814.5 754.1 808.6 766.3 824.4C778.5 840.2 776.8 838.1 782.0 845.0" fill="none" stroke="#2b1a10" stroke-width="4" filter="url(#b1)" opacity=".8"/>
<path d="M690.0 845.0C685.8 838.1 685.5 838.2 677.3 824.4C669.1 810.6 676.3 816.5 665.4 803.6C654.5 790.7 659.4 798.6 644.6 785.8C629.8 773.0 635.7 779.9 620.9 765.1C606.1 750.3 613.0 757.1 600.1 741.3C587.2 725.5 592.3 730.2 582.3 717.6C572.3 705.0 580.1 713.4 570.0 703.5C559.9 693.6 558.0 693.2 552.0 688.0" fill="none" stroke="#2b1a10" stroke-width="3" filter="url(#b1)" opacity=".8"/>
<path d="M546 600 L556 690 L580 722 L572 660 L562 610 Z" fill="#5a3d2a" filter="url(#b5)" opacity=".55"/>
<ellipse cx="612" cy="680" rx="34" ry="13" fill="#8a654a" filter="url(#b5)" opacity=".75" transform="rotate(52 612 680)"/>
<ellipse cx="715" cy="800" rx="40" ry="10" fill="#86624a" filter="url(#b5)" opacity=".6" transform="rotate(48 715 800)"/>
</g>
<g clip-path="url(#cNeck)"><path d="M400.0 520.0C392.5 532.0 400.8 533.6 402.0 545.0C403.2 556.4 407.4 555.6 404.4 562.7C401.4 569.8 399.2 566.7 390.8 571.8C382.4 576.9 379.3 576.1 373.0 582.0C366.7 587.9 369.9 578.5 367.0 594.0C364.1 609.5 345.2 625.1 362.0 640.0C378.8 654.9 384.7 650.0 430.0 650.0C475.3 650.0 503.7 656.0 532.0 640.0C560.3 624.0 535.5 604.9 536.0 590.0C536.5 575.1 541.0 589.1 533.7 584.2C526.4 579.3 519.7 579.3 508.8 571.8C497.9 564.3 498.7 564.4 492.9 555.9C487.1 547.4 488.8 549.6 487.0 540.0C485.2 530.4 486.4 529.9 486.0 520.0C485.6 510.1 489.8 509.7 485.5 503.0C481.2 496.3 484.8 495.8 470.0 495.0C455.2 494.2 448.7 493.3 430.0 500.0C411.3 506.7 407.5 508.0 400.0 520.0Z" fill="#7a5b43"/>
<path d="M398 536 L404 552 L425 556 L450 550 L470 540 L480 500 L490 500 L489 540 L464 560 L425 566 L402 560 Z" fill="#3c2a1f" filter="url(#b5)" opacity=".7"/>
<path d="M484.8 502.0C483.1 505.3 483.5 504.3 479.7 511.8C475.9 519.3 478.9 516.5 473.3 524.6C467.7 532.7 470.8 529.7 463.0 536.2C455.2 542.7 458.6 539.7 450.0 544.0C441.4 548.3 445.7 546.5 437.2 549.1C428.7 551.7 433.0 551.1 424.4 551.9C415.8 552.7 418.8 554.1 411.5 551.5C404.2 548.9 405.5 546.5 402.5 544.0" fill="none" stroke="#1e130c" stroke-width="11" filter="url(#b2)" opacity=".85"/>
<path d="M400 545 L405 568 L385 580 L366 592 L372 612 L392 622 L398 600 L412 578 Z" fill="#4a3222" filter="url(#b5)" opacity=".7"/>
<path d="M476 566 L500 584 L528 594 L508 612 L480 620 L458 604 Z" fill="#87674d" filter="url(#b8)" opacity=".7"/>
<path d="M372 606 Q400 618 428 630" fill="none" stroke="#4e3424" stroke-width="4" filter="url(#b2)" opacity=".65"/>
<path d="M436 621 Q475 615 515 600" fill="none" stroke="#553a28" stroke-width="3.500" filter="url(#b2)" opacity=".65"/>
<path d="M433 612 L431 637" fill="none" stroke="#4a3020" stroke-width="3" filter="url(#b2)" opacity=".55"/>
<path d="M486.0 505.0C486.3 516.7 484.7 523.0 487.0 540.0C489.3 557.0 485.6 545.3 492.9 555.9C500.2 566.5 495.2 562.4 508.8 571.8C522.4 581.2 525.4 580.1 533.7 584.2" fill="none" stroke="#2b1a10" stroke-width="2.500" filter="url(#b1)" opacity=".7"/>
<path d="M402.0 545.0C402.8 550.9 408.1 553.8 404.4 562.7C400.7 571.6 401.4 565.8 390.8 571.8C380.2 577.8 378.7 577.8 372.6 580.8" fill="none" stroke="#2b1a10" stroke-width="2.500" filter="url(#b1)" opacity=".7"/>
<circle cx="455" cy="578.500" r="1.200" fill="#2a160c"/>
</g>
<g clip-path="url(#cShirt)"><path d="M372.6 580.8C371.1 587.6 368.0 589.9 368.0 601.3C368.0 612.7 365.0 606.2 372.6 614.9C380.2 623.6 378.7 621.4 390.8 627.4C402.9 633.4 395.7 629.5 408.9 633.0C422.1 636.5 413.9 637.6 430.5 638.0C447.1 638.4 439.5 638.1 458.8 634.2C478.1 630.3 470.9 633.4 488.3 626.2C505.7 619.0 498.9 622.4 511.0 612.6C523.1 602.8 517.0 606.2 524.6 596.7C532.2 587.2 530.7 588.4 533.7 584.2C541.1 588.1 548.5 591.9 555.9 595.8C552.8 600.5 551.4 599.7 546.7 610.0C542.0 620.3 543.1 615.6 541.7 626.7C540.3 637.8 540.3 632.3 542.5 643.4C544.7 654.5 543.7 648.4 548.4 660.1C553.1 671.8 551.2 666.7 556.7 678.4C562.2 690.1 560.6 686.7 565.0 695.1C569.4 703.5 568.3 700.7 570.0 703.5C573.6 705.5 578.7 699.9 580.8 709.5C582.9 719.1 580.3 714.9 576.4 732.4C572.5 749.9 574.9 742.3 569.0 762.1C563.1 781.9 565.0 764.2 558.6 791.8C552.2 819.4 552.7 827.3 549.7 845.0C481.5 845.0 413.2 845.0 345.0 845.0C344.0 829.2 343.5 827.3 342.0 797.7C340.5 768.1 343.4 777.0 340.4 756.2C337.4 735.4 337.5 745.2 333.0 735.4C328.5 725.6 330.5 736.3 326.8 726.8C323.1 717.3 325.1 719.6 321.8 706.8C318.5 694.0 319.6 697.3 316.8 688.4C314.0 679.5 314.0 686.7 313.4 680.0C312.8 673.3 311.7 677.3 315.1 668.4C318.5 659.5 316.8 665.6 323.5 653.4C330.2 641.2 329.0 646.2 335.1 631.7C341.2 617.2 338.4 623.6 341.8 610.0C345.2 596.4 344.2 597.3 345.4 591.0C354.5 587.6 363.5 584.2 372.6 580.8Z" fill="#d4d4d4"/>
<path d="M440 770 L560 740 L570 845 L430 845 Z" fill="#b4b4b4" filter="url(#b12)" opacity=".8"/>
<path d="M330 745 L420 755 L560 750 L575 845 L330 845 Z" fill="#adadad" filter="url(#b8)" opacity=".55"/>
<path d="M336 745 L362 760 L368 845 L340 845 Z" fill="#999" filter="url(#b5)" opacity=".7"/>
<path d="M330 640 L372 600 L400 640 L380 680 L330 690 Z" fill="#c2c2c2" filter="url(#b8)" opacity=".8"/>
<path d="M548 706 L585 700 L585 845 L525 845 L542 790 L556 745 Z" fill="#838383" filter="url(#b3)"/>
<path d="M505 790 L560 765 L560 845 L490 845 Z" fill="#a2a2a2" filter="url(#b8)" opacity=".8"/>
<path d="M315.0 680.0C317.0 688.7 315.0 687.5 321.0 706.0C327.0 724.5 326.5 718.7 333.0 735.4C339.5 752.1 337.4 735.4 340.4 756.2C343.4 777.0 340.5 768.1 342.0 797.7C343.5 827.3 344.0 829.2 345.0 845.0" fill="none" stroke="#909090" stroke-width="9" filter="url(#b3)"/>
<path d="M345 765 L372 775 L378 845 L345 845 Z" fill="#aeaeae" filter="url(#b8)" opacity=".8"/>
<path d="M424.0 716.0C425.3 722.7 420.7 724.0 428.0 736.0C435.3 748.0 432.7 743.3 446.0 752.0C459.3 760.7 453.3 757.7 468.0 762.0C482.7 766.3 474.0 766.0 490.0 765.0C506.0 764.0 499.3 768.7 516.0 759.0C532.7 749.3 523.3 753.0 540.0 736.0C556.7 719.0 557.3 717.3 566.0 708.0" fill="none" stroke="#959595" stroke-width="8" filter="url(#b3)" opacity=".95"/>
<path d="M332.0 730.0C336.7 734.0 334.0 735.7 346.0 742.0C358.0 748.3 352.7 748.0 368.0 749.0C383.3 750.0 378.7 750.7 392.0 745.0C405.3 739.3 400.0 741.7 408.0 732.0C416.0 722.3 413.3 721.3 416.0 716.0" fill="none" stroke="#a4a4a4" stroke-width="7" filter="url(#b3)" opacity=".85"/>
<path d="M430 641 Q426 680 419 724" fill="none" stroke="#a0a0a0" stroke-width="4" filter="url(#b2)" opacity=".9"/><path d="M419 724 Q414 780 412 845" fill="none" stroke="#b4b4b4" stroke-width="5" filter="url(#b3)" opacity=".8"/>
<path d="M425 775 L443 800 L438 845 L420 845 Z" fill="#b0b0b0" filter="url(#b5)" opacity=".7"/>
<path d="M445 652 Q490 652 528 630 L542 684 Q490 694 445 692 Z" fill="#c2c2c2" filter="url(#b8)" opacity=".8"/>
<ellipse cx="488" cy="727" rx="20" ry="18" fill="#fff" filter="url(#b5)"/>
<ellipse cx="488" cy="727" rx="13" ry="12" fill="#fff" filter="url(#b3)"/>
<ellipse cx="403" cy="708" rx="12" ry="28" fill="#fff" filter="url(#b5)" transform="rotate(14 403 708)"/>
<ellipse cx="413" cy="668" rx="5" ry="14" fill="#fff" filter="url(#b3)" opacity=".9"/>
<ellipse cx="404" cy="778" rx="7" ry="12" fill="#fff" filter="url(#b3)" opacity=".9"/>
<ellipse cx="458" cy="790" rx="13" ry="25" fill="#fff" filter="url(#b5)" opacity=".95" transform="rotate(-15 458 790)"/>
<ellipse cx="470" cy="822" rx="10" ry="12" fill="#f6f6f6" filter="url(#b5)" opacity=".8"/>
<ellipse cx="362" cy="700" rx="22" ry="30" fill="#e2e2e2" filter="url(#b8)" opacity=".8"/>
<ellipse cx="385" cy="805" rx="10" ry="25" fill="#e6e6e6" filter="url(#b5)" opacity=".8"/>
<ellipse cx="520" cy="690" rx="14" ry="18" fill="#e4e4e4" filter="url(#b8)" opacity=".8"/>
<path d="M547 650 L558 688 L566 703" fill="none" stroke="#fff" stroke-width="4" filter="url(#b2)" opacity=".9"/>
<path d="M352 596 L345 625 L332 650" fill="none" stroke="#ececec" stroke-width="8" filter="url(#b3)" opacity=".9"/>
<path d="M317 662 L315 690" fill="none" stroke="#a0a0a0" stroke-width="5" filter="url(#b2)" opacity=".9"/>
</g>
<g clip-path="url(#cHead)"><path d="M384.2 447.0C385.2 439.9 383.8 442.4 385.5 433.7C387.2 425.0 386.0 429.1 389.3 421.0C392.6 412.9 390.6 416.6 395.4 409.5C400.2 402.4 397.6 405.5 403.7 399.7C409.8 393.9 406.6 396.3 413.6 392.0C420.6 387.7 417.0 389.4 424.8 386.8C432.6 384.2 428.8 385.0 436.9 384.2C445.0 383.4 441.0 383.3 449.1 384.4C457.2 385.5 453.4 384.6 461.2 387.4C469.0 390.2 465.4 388.5 472.4 392.9C479.4 397.3 476.2 394.9 482.3 400.7C488.4 406.5 485.8 403.4 490.6 410.4C495.4 417.4 493.4 413.8 496.7 421.7C500.0 429.6 498.8 425.7 500.5 434.1C502.2 442.5 501.9 439.0 501.8 447.0C501.7 455.0 499.6 453.7 500.2 458.0C500.8 462.3 501.1 457.3 503.5 459.8C505.9 462.3 505.9 460.8 507.5 465.5C509.1 470.2 508.5 468.4 508.2 474.0C507.9 479.6 508.2 477.0 506.7 482.2C505.2 487.4 505.9 485.2 503.8 489.5C501.7 493.8 503.0 491.6 500.3 495.0C497.6 498.4 498.8 497.4 495.8 499.8C492.8 502.2 494.2 502.0 491.3 502.3C488.4 502.6 489.4 500.9 487.2 500.8C485.0 500.7 487.3 498.3 484.8 502.0C482.3 505.7 483.5 504.3 479.7 511.8C475.9 519.3 478.9 516.5 473.3 524.6C467.7 532.7 470.8 529.7 463.0 536.2C455.2 542.7 458.6 539.7 450.0 544.0C441.4 548.3 445.7 546.5 437.2 549.1C428.7 551.7 433.0 551.1 424.4 551.9C415.8 552.7 418.8 554.1 411.5 551.5C404.2 548.9 407.9 550.4 402.5 544.0C397.1 537.6 399.3 540.6 395.4 532.4C391.5 524.2 393.5 528.5 390.9 519.5C388.3 510.5 389.8 514.7 387.7 505.3C385.6 495.9 386.3 501.1 384.5 491.2C382.7 481.3 383.0 485.4 382.2 475.7C381.4 466.0 381.9 468.9 382.0 462.0C382.1 455.1 381.9 460.0 382.6 455.0C383.3 450.0 383.2 454.1 384.2 447.0Z" fill="url(#gH)"/>
<path d="M384.0 445.0C384.5 441.2 383.7 441.7 385.5 433.7C387.3 425.7 386.0 429.1 389.3 421.0C392.6 412.9 390.6 416.6 395.4 409.5C400.2 402.4 397.6 405.5 403.7 399.7C409.8 393.9 406.6 396.3 413.6 392.0C420.6 387.7 417.0 389.4 424.8 386.8C432.6 384.2 428.8 385.0 436.9 384.2C445.0 383.4 441.0 383.3 449.1 384.4C457.2 385.5 453.4 384.6 461.2 387.4C469.0 390.2 465.4 388.5 472.4 392.9C479.4 397.3 476.2 394.9 482.3 400.7C488.4 406.5 485.8 403.4 490.6 410.4C495.4 417.4 493.4 413.8 496.7 421.7C500.0 429.6 498.7 426.3 500.5 434.1C502.3 441.9 501.5 441.4 502.0 445.0" fill="none" stroke="#3e2f25" stroke-width="20" filter="url(#b5)" opacity=".8"/>
<path d="M474 390 L506 428 L505 462 L490 500 L481 470 L486 430 Z" fill="#3a281c" filter="url(#b5)" opacity=".75"/>
<path d="M380 452 L393 456 L396 495 L402 525 L410 552 L395 552 L378 500 Z" fill="#3e2a1e" filter="url(#b3)" opacity=".7"/>
<ellipse cx="448" cy="490" rx="16" ry="20" fill="#94704f" filter="url(#b8)" opacity=".6"/>
<path d="M486 480 L478 515 L460 538 L430 552 L410 553 L440 535 L462 515 L474 488 Z" fill="#4e3829" filter="url(#b5)" opacity=".7"/>
<path d="M484.8 502.0C483.1 505.3 483.5 504.3 479.7 511.8C475.9 519.3 478.9 516.5 473.3 524.6C467.7 532.7 470.8 529.7 463.0 536.2C455.2 542.7 458.6 539.7 450.0 544.0C441.4 548.3 445.7 546.5 437.2 549.1C428.7 551.7 433.0 551.1 424.4 551.9C415.8 552.7 418.8 554.1 411.5 551.5C404.2 548.9 407.9 550.4 402.5 544.0C397.1 537.6 399.3 540.6 395.4 532.4C391.5 524.2 393.5 528.5 390.9 519.5C388.3 510.5 389.8 514.7 387.7 505.3C385.6 495.9 386.3 501.1 384.5 491.2C382.7 481.3 383.0 487.8 382.2 475.7C381.4 463.6 382.2 461.9 382.2 455.0" fill="none" stroke="#2b1a10" stroke-width="3" filter="url(#b1)" opacity=".85"/>
<path d="M382.6 457.0C383.1 453.7 383.2 454.8 384.2 447.0C385.2 439.2 383.8 442.4 385.5 433.7C387.2 425.0 386.0 429.1 389.3 421.0C392.6 412.9 390.6 416.6 395.4 409.5C400.2 402.4 397.6 405.5 403.7 399.7C409.8 393.9 406.6 396.3 413.6 392.0C420.6 387.7 417.0 389.4 424.8 386.8C432.6 384.2 428.8 385.0 436.9 384.2C445.0 383.4 441.0 383.3 449.1 384.4C457.2 385.5 453.4 384.6 461.2 387.4C469.0 390.2 465.4 388.5 472.4 392.9C479.4 397.3 476.2 394.9 482.3 400.7C488.4 406.5 485.8 403.4 490.6 410.4C495.4 417.4 493.4 413.8 496.7 421.7C500.0 429.6 498.8 425.7 500.5 434.1C502.2 442.5 501.9 439.0 501.8 447.0C501.7 455.0 500.7 454.3 500.2 458.0" fill="none" stroke="#2b1a10" stroke-width="3.500" filter="url(#b1)" opacity=".85"/>
<path d="M498 461 Q507.500 462 508 474 Q506 489 492 502 Q486 494 490 478 Z" fill="#8a684e" filter="url(#b1)"/>
<path d="M498.500 469 Q502.500 478 494.500 493" fill="none" stroke="#4a3223" stroke-width="2" filter="url(#b1)"/>
<path d="M499 460 Q493 472 488 500" fill="none" stroke="#3a281c" stroke-width="3" filter="url(#b2)" opacity=".8"/>
<ellipse cx="396" cy="464" rx="12" ry="7.500" fill="#46301f" filter="url(#b2)" opacity=".8"/>
<ellipse cx="442" cy="465" rx="13.500" ry="7.500" fill="#5a4030" filter="url(#b2)" opacity=".7"/>
<ellipse cx="397.500" cy="465.500" rx="6.500" ry="2.600" fill="#a39a9d"/><ellipse cx="396" cy="465.300" rx="3" ry="2.600" fill="#777783"/><circle cx="396" cy="465.300" r="1.200" fill="#34343f"/>
<ellipse cx="442.500" cy="466.200" rx="7.500" ry="3" fill="#a39a9d"/><ellipse cx="440.500" cy="466" rx="3.300" ry="2.900" fill="#777783"/><circle cx="440.500" cy="466" r="1.300" fill="#34343f"/>
<path d="M389.500 463.500Q397 460.500 405.500 464.500" fill="none" stroke="#241610" stroke-width="1.500" opacity=".9"/><path d="M433.500 464Q442 460.500 451.500 465" fill="none" stroke="#241610" stroke-width="1.500" opacity=".9"/>
<path d="M383 453.500 Q393 450.500 406 456.500" fill="none" stroke="#2a1a10" stroke-width="2.400" filter="url(#b1)" opacity=".85"/>
<path d="M425 452.500 Q440 449.500 458 456.500" fill="none" stroke="#2a1a10" stroke-width="2" filter="url(#b1)" opacity=".85"/>
<path d="M409 458 Q405 475 402 490 Q404 496 412 497" fill="none" stroke="#3a281c" stroke-width="3" filter="url(#b1)" opacity=".8"/>
<path d="M404 494 Q414 500 427 495.500" fill="none" stroke="#40291c" stroke-width="2.500" filter="url(#b1)" opacity=".7"/>
<ellipse cx="417" cy="482" rx="5.500" ry="10" fill="#987455" filter="url(#b2)" opacity=".6"/>
<path d="M400 512.500 Q416 510.500 437 514.500 Q424 524.500 406 521.500 Z" fill="#8e6660" filter="url(#b1)"/>
<path d="M400 513 Q416 514.500 437 515" fill="none" stroke="#54342c" stroke-width="1.600" filter="url(#b1)" opacity=".85"/>
<path d="M408 527 Q420 530 432 526" fill="none" stroke="#5a4030" stroke-width="2.500" filter="url(#b2)" opacity=".6"/>
</g>
</g>
</svg>
<div id="vptool" class="abs"><div class="abs" style="top:13.500px;font-size:11.500px;color:#cfcfcf;left:-2px">View</div><svg class="abs" style="left:0;top:0" width="900" height="36" viewBox="0 101 900 36"><path d="M48.500 118.500H57.500L53 125Z" fill="#d8d8d8"/><rect x="71.500" y="105.500" width="49" height="31" fill="#54545c" stroke="#d6ab35" stroke-width="1"/><defs><radialGradient id="sph" cx=".4" cy=".35" r=".7"><stop offset="0" stop-color="#e2e2e2"/><stop offset=".6" stop-color="#a8a8a8"/><stop offset="1" stop-color="#6a6a6a"/></radialGradient></defs><circle cx="86" cy="121" r="8.500" fill="url(#sph)"/><path d="M78.500 124Q88 124 92 114" fill="none" stroke="#eee" stroke-width="1.300"/><path d="M82 128.500Q91 127 94 119" fill="none" stroke="#777" stroke-width="1"/><path d="M98.500 118.500H107L102.800 125Z" fill="#f2b62c"/><g transform="translate(129.9 112.9)" fill="#e0e0e0"><path d="M0 0L6 3.400L0 6.800Z"/><rect x="6.400" y="2.700" width="7.700" height="1.300"/><rect x="1.900" y="8.400" width="12.200" height="1.300"/><rect x="1.900" y="11.900" width="12.200" height="1.300"/></g><line x1="757.5" y1="105" x2="757.5" y2="136" stroke="#444"/><line x1="758.5" y1="105" x2="758.5" y2="136" stroke="#666" stroke-opacity=".5"/><line x1="789.5" y1="105" x2="789.5" y2="136" stroke="#444"/><line x1="790.5" y1="105" x2="790.5" y2="136" stroke="#666" stroke-opacity=".5"/><line x1="821.5" y1="105" x2="821.5" y2="136" stroke="#444"/><line x1="822.5" y1="105" x2="822.5" y2="136" stroke="#666" stroke-opacity=".5"/><line x1="853.5" y1="105" x2="853.5" y2="136" stroke="#444"/><line x1="854.5" y1="105" x2="854.5" y2="136" stroke="#666" stroke-opacity=".5"/><line x1="885.5" y1="105" x2="885.5" y2="136" stroke="#444"/><line x1="886.5" y1="105" x2="886.5" y2="136" stroke="#666" stroke-opacity=".5"/><g transform="translate(773 122)" fill="none" stroke="#dcdcdc"><path d="M-4.500 -1.500A10 4.600 0 1 0 7.500 4.300" stroke-width="2.200"/><circle cx="1.500" cy="-4" r="3.200" fill="#dcdcdc" stroke="none"/><path d="M5.500 1L11.500 3.300L6 7.800Z" fill="#dcdcdc" stroke="none"/></g><g transform="translate(805 121)" fill="#dcdcdc"><circle r="2.300"/><path d="M-1.200 -6.500H1.200V-3.500H-1.200Z M-1.200 3.500H1.200V6.500H-1.200Z M-6.500 -1.200H-3.500V1.200H-6.500Z M3.500 -1.200H6.500V1.200H3.500Z"/><path d="M0 -11.500L4.500 -6H-4.500Z M0 11.500L4.500 6H-4.500Z M-11.500 0L-6 -4.500V4.500Z M11.500 0L6 -4.500V4.500Z"/></g><g fill="none" stroke="#dcdcdc"><circle cx="840.500" cy="117.500" r="6.300" stroke-width="2.200"/><path d="M836 122.500L828.500 130" stroke-width="3.600" stroke-linecap="round"/></g><g transform="translate(869 121)" fill="none" stroke="#dcdcdc"><path d="M-8.500 0A9.500 8.500 0 0 1 8.500 0" stroke-width="2.400"/><path d="M-12 -3.500L-4.500 -1L-9.500 5Z M12 -3.500L4.500 -1L9.500 5Z" fill="#dcdcdc" stroke="none"/><circle cx="0" cy="5" r="2.500" fill="#dcdcdc" stroke="none"/></g><path d="M892.500 119V113.500H898M892.500 124V129.500H898" fill="none" stroke="#dcdcdc" stroke-width="2"/><rect x="897.500" y="120" width="3" height="2.500" fill="#dcdcdc"/></svg></div>
</div>
<div id="rightdark" class="abs"><svg class="abs" style="left:0;top:0;z-index:3" width="34" height="759" viewBox="900 80 34 759"><defs><linearGradient id="vg" x1="0" y1="0" x2="1" y2="0"><stop offset="0" stop-color="#3e3e3e"/><stop offset="1" stop-color="#484848"/></linearGradient><linearGradient id="vga" x1="0" y1="0" x2="1" y2="0"><stop offset="0" stop-color="#525252"/><stop offset="1" stop-color="#5e5e5e"/></linearGradient></defs><g transform="translate(911.3 82)" fill="#e0e0e0"><path d="M0 0L6 3.400L0 6.800Z"/><rect x="6.400" y="2.700" width="7.700" height="1.300"/><rect x="1.900" y="8.400" width="12.200" height="1.300"/><rect x="1.900" y="11.900" width="12.200" height="1.300"/></g><path d="M929.500 103.5 L912 112.0 Q910 113.0 910 115.5 V173.5 Q910 176.0 912 177.0 L929.500 185.5 Z" fill="url(#vg)"/><text transform="translate(923 144.5) rotate(-90)" text-anchor="middle" font-size="12.3" fill="#a6a6a6" font-family="Liberation Sans, sans-serif">Cameras</text><path d="M929.500 190.7 L912 199.2 Q910 200.2 910 202.7 V244 Q910 246.5 912 247.5 L929.500 256 Z" fill="url(#vg)"/><text transform="translate(923 223.35) rotate(-90)" text-anchor="middle" font-size="12.3" fill="#a6a6a6" font-family="Liberation Sans, sans-serif">Scene</text><path d="M929.500 261.5 L912 270.0 Q910 271.0 910 273.5 V358 Q910 360.5 912 361.5 L929.500 370 Z" fill="url(#vg)"/><text transform="translate(923 315.75) rotate(-90)" text-anchor="middle" font-size="12.3" fill="#a6a6a6" font-family="Liberation Sans, sans-serif">Draw Settings</text><path d="M929.500 374.5 L912 383.0 Q910 384.0 910 386.5 V432.5 Q910 435.0 912 436.0 L929.500 444.5 Z" fill="url(#vg)"/><text transform="translate(923 409.5) rotate(-90)" text-anchor="middle" font-size="12.3" fill="#a6a6a6" font-family="Liberation Sans, sans-serif">Posing</text><path d="M929.500 449.5 L912 458.0 Q910 459.0 910 461.5 V514.5 Q910 517.0 912 518.0 L929.500 526.5 Z" fill="url(#vg)"/><text transform="translate(923 488.0) rotate(-90)" text-anchor="middle" font-size="12.3" fill="#a6a6a6" font-family="Liberation Sans, sans-serif">Shaping</text><path d="M933 527.5 L911.500 538.5 Q909.500 539.5 909.500 542.5 V601.5 Q909.500 604.5 911.500 605.5 L933 616.5 Z" fill="url(#vga)"/><text transform="translate(923 572.0) rotate(-90)" text-anchor="middle" font-size="12.3" fill="#f0f0f0" font-family="Liberation Sans, sans-serif">Surfaces</text><path d="M929.500 617.5 L912 626.0 Q910 627.0 910 629.5 V701 Q910 703.5 912 704.5 L929.500 713 Z" fill="url(#vg)"/><text transform="translate(923 665.25) rotate(-90)" text-anchor="middle" font-size="12.3" fill="#a6a6a6" font-family="Liberation Sans, sans-serif">Parameters</text><path d="M929.500 718 L912 726.5 Q910 727.5 910 730 V771 Q910 773.5 912 774.5 L929.500 783 Z" fill="url(#vg)"/><text transform="translate(923 750.5) rotate(-90)" text-anchor="middle" font-size="12.3" fill="#a6a6a6" font-family="Liberation Sans, sans-serif">Lights</text><path d="M905.500 539.500L901.500 543.500L905.500 547.500ZM905.500 546L901.500 550L905.500 554Z" fill="#565656"/></svg></div>
<div id="panel" class="abs"></div>
<svg class="abs" style="left:929px;top:80px" width="353" height="759" viewBox="929 80 353 759" font-family="Liberation Sans, sans-serif" font-size="11"><defs><linearGradient id="pt" x1="0" y1="0" x2="0" y2="1"><stop offset="0" stop-color="#5e5e5e"/><stop offset=".5" stop-color="#545454"/><stop offset="1" stop-color="#4a4a4a"/></linearGradient><linearGradient id="pta" x1="0" y1="0" x2="0" y2="1"><stop offset="0" stop-color="#686868"/><stop offset="1" stop-color="#5e5e5e"/></linearGradient><linearGradient id="btn" x1="0" y1="0" x2="0" y2="1"><stop offset="0" stop-color="#5e5e5e"/><stop offset="1" stop-color="#474747"/></linearGradient></defs><rect x="929" y="80" width="353" height="759" fill="#626262"/><rect x="929" y="126" width="1.200" height="713" fill="#404040"/><rect x="930.200" y="126" width="1.800" height="713" fill="#565656"/><rect x="932" y="126" width="1.200" height="713" fill="#6c6c6c"/><rect x="933" y="85" width="344" height="18" fill="url(#pt)"/><rect x="933" y="85" width="344" height="1" fill="#707070"/><rect x="933" y="102" width="344" height="1.200" fill="#333"/><rect x="994.5" y="85" width="1" height="18" fill="#363636"/><rect x="1047" y="85" width="1" height="18" fill="#363636"/><rect x="1139.5" y="85" width="1" height="18" fill="#363636"/><rect x="1273" y="85" width="1" height="18" fill="#363636"/><rect x="1140.500" y="86" width="1" height="16" fill="#666" opacity=".6"/><rect x="995.500" y="81" width="51.500" height="22.500" fill="url(#pta)"/><rect x="995.500" y="81" width="1" height="22" fill="#707070"/><rect x="1046" y="81" width="1" height="22" fill="#707070"/><text x="964" y="97" text-anchor="middle" font-size="10.5" fill="#8c8c8c">Presets</text><text x="1021.500" y="97" text-anchor="middle" font-size="10.3" fill="#e8e8e8">Editor</text><text x="1093.500" y="97" text-anchor="middle" font-size="10.7" fill="#8c8c8c">Shader Baker</text><rect x="933" y="103.200" width="344" height="23" fill="#5e5e5e"/><text x="936" y="118.500" font-size="10.8" fill="#e8e8e8">Shader : DAZ Studio Default (RSL)</text><rect x="933" y="126" width="182" height="713" fill="#444"/><rect x="934" y="126" width="181" height="19" fill="#262626"/><text x="946" y="140" fill="#eaeaea">All</text><rect x="934" y="145" width="181" height="1" fill="#4c4c4c"/><rect x="934" y="146" width="181" height="19" fill="#262626"/><text x="946" y="160" fill="#eaeaea">Favorites</text><rect x="934" y="165" width="181" height="1" fill="#4c4c4c"/><rect x="934" y="166" width="181" height="19" fill="#262626"/><text x="946" y="180" fill="#eaeaea">Currently Used</text><rect x="934" y="185" width="181" height="1" fill="#4c4c4c"/><path d="M936 193.500H943L939.500 199.500Z" fill="#ddd"/><g transform="translate(954 196)"><path d="M0 -7.500L6.800 -3.700V3.700L0 7.500L-6.800 3.700V-3.700Z" fill="#4c4c4c" stroke="#7a7a7a" stroke-width="1.100"/><path d="M0 -4.800L4.200 -2.500L0 -.2L-4.200 -2.500Z" fill="#e4e4e4"/><path d="M-4.400 -1.300L-.5 .9V5.300L-4.400 3.100Z" fill="#c4c4c4"/><path d="M4.400 -1.300L.5 .9V5.300L4.400 3.100Z" fill="#dcdcdc"/></g><text x="966" y="200" font-size="10.4" fill="#7a7a7a">Michael 9 HD Shell 1</text><rect x="936" y="206" width="179" height="1" fill="#4d4d4d"/><path d="M947 212.5L953 216L947 219.5Z" fill="#ddd"/><g transform="translate(964 216)"><rect x="-6.500" y="-3" width="6.500" height="6.500" transform="rotate(-42 -3 0)" fill="#444" stroke="#9a9a9a" stroke-width="1.100"/><rect x="-2.500" y="-6.500" width="6" height="6" transform="rotate(-18)" fill="#7a7a7a"/><rect x="-1" y="-2.500" width="7.500" height="7.500" transform="rotate(-42 2.500 1.500)" fill="#d0d0d0"/></g><text x="976" y="220" font-size="10.45" fill="#7a7a7a">Arms</text><rect x="953" y="226" width="162" height="1" fill="#4d4d4d"/><rect x="934" y="226" width="181" height="20" fill="#f6bd2e"/><path d="M947 232.5L953 236L947 239.5Z" fill="#111"/><g transform="translate(964 236)"><rect x="-6.500" y="-3" width="6.500" height="6.500" transform="rotate(-42 -3 0)" fill="#f2b62c" stroke="#111" stroke-width="1.100"/><rect x="-2.500" y="-6.500" width="6" height="6" transform="rotate(-18)" fill="#111"/><rect x="-1" y="-2.500" width="7.500" height="7.500" transform="rotate(-42 2.500 1.500)" fill="#111"/></g><text x="976" y="240" font-size="11" fill="#111">Body</text><rect x="953" y="246" width="162" height="1" fill="#4d4d4d"/><path d="M947 252.5L953 256L947 259.5Z" fill="#ddd"/><g transform="translate(964 256)"><rect x="-6.500" y="-3" width="6.500" height="6.500" transform="rotate(-42 -3 0)" fill="#444" stroke="#9a9a9a" stroke-width="1.100"/><rect x="-2.500" y="-6.500" width="6" height="6" transform="rotate(-18)" fill="#7a7a7a"/><rect x="-1" y="-2.500" width="7.500" height="7.500" transform="rotate(-42 2.500 1.500)" fill="#d0d0d0"/></g><text x="976" y="260" font-size="10.45" fill="#7a7a7a">Fingernails</text><rect x="953" y="266" width="162" height="1" fill="#4d4d4d"/><path d="M947 272.5L953 276L947 279.5Z" fill="#ddd"/><g transform="translate(964 276)"><rect x="-6.500" y="-3" width="6.500" height="6.500" transform="rotate(-42 -3 0)" fill="#444" stroke="#9a9a9a" stroke-width="1.100"/><rect x="-2.500" y="-6.500" width="6" height="6" transform="rotate(-18)" fill="#7a7a7a"/><rect x="-1" y="-2.500" width="7.500" height="7.500" transform="rotate(-42 2.500 1.500)" fill="#d0d0d0"/></g><text x="976" y="280" font-size="10.45" fill="#7a7a7a">Head</text><rect x="953" y="286" width="162" height="1" fill="#4d4d4d"/><path d="M947 292.5L953 296L947 299.5Z" fill="#ddd"/><g transform="translate(964 296)"><rect x="-6.500" y="-3" width="6.500" height="6.500" transform="rotate(-42 -3 0)" fill="#444" stroke="#9a9a9a" stroke-width="1.100"/><rect x="-2.500" y="-6.500" width="6" height="6" transform="rotate(-18)" fill="#7a7a7a"/><rect x="-1" y="-2.500" width="7.500" height="7.500" transform="rotate(-42 2.500 1.500)" fill="#d0d0d0"/></g><text x="976" y="300" font-size="10.45" fill="#7a7a7a">Legs</text><rect x="953" y="306" width="162" height="1" fill="#4d4d4d"/><path d="M947 312.5L953 316L947 319.5Z" fill="#ddd"/><g transform="translate(964 316)"><rect x="-6.500" y="-3" width="6.500" height="6.500" transform="rotate(-42 -3 0)" fill="#444" stroke="#9a9a9a" stroke-width="1.100"/><rect x="-2.500" y="-6.500" width="6" height="6" transform="rotate(-18)" fill="#7a7a7a"/><rect x="-1" y="-2.500" width="7.500" height="7.500" transform="rotate(-42 2.500 1.500)" fill="#d0d0d0"/></g><text x="976" y="320" font-size="10.45" fill="#7a7a7a">Mouth Cavity</text><rect x="953" y="326" width="162" height="1" fill="#4d4d4d"/><path d="M947 332.5L953 336L947 339.5Z" fill="#ddd"/><g transform="translate(964 336)"><rect x="-6.500" y="-3" width="6.500" height="6.500" transform="rotate(-42 -3 0)" fill="#444" stroke="#9a9a9a" stroke-width="1.100"/><rect x="-2.500" y="-6.500" width="6" height="6" transform="rotate(-18)" fill="#7a7a7a"/><rect x="-1" y="-2.500" width="7.500" height="7.500" transform="rotate(-42 2.500 1.500)" fill="#d0d0d0"/></g><text x="976" y="340" font-size="10.45" fill="#7a7a7a">Toenails</text><rect x="953" y="346" width="162" height="1" fill="#4d4d4d"/><rect x="1115" y="126" width="8" height="713" fill="#474747"/><rect x="1117" y="126" width="1" height="713" fill="#626262"/><rect x="1122" y="126" width="1.500" height="713" fill="#6a6a6a"/><rect x="1123.500" y="126" width="153.500" height="713" fill="#575757"/><rect x="1124" y="127" width="153" height="25" fill="#4e4e4e"/><rect x="1153" y="128.500" width="124" height="22.500" fill="#6c6c6c"/><g fill="none" stroke="#8c8c8c"><circle cx="1140" cy="136.500" r="4.300" stroke-width="1.500"/><path d="M1137 140L1131.500 145.500" stroke-width="2.400" stroke-linecap="round"/><path d="M1142 146.500h4l-2 2.200z" fill="#8c8c8c" stroke="none"/></g><text x="1157" y="144" fill="#e4e4e4">opac</text><path d="M1255 139.500L1260.500 133.500H1275.500V145.500H1260.500Z" fill="#d8d8d8"/><path d="M1265 136.500l6 6m0 -6l-6 6" stroke="#444" stroke-width="1.500"/><rect x="1124" y="154" width="153" height="16" fill="#2b2b2b"/><text x="1127" y="165" fill="#e0e0e0">...pecular Through Opacity</text><g transform="translate(1270 162)" fill="#4a4a4a"><circle r="4"/><rect x="-1.200" y="-6" width="2.400" height="3" transform="rotate(0)"/><rect x="-1.200" y="-6" width="2.400" height="3" transform="rotate(45)"/><rect x="-1.200" y="-6" width="2.400" height="3" transform="rotate(90)"/><rect x="-1.200" y="-6" width="2.400" height="3" transform="rotate(135)"/><rect x="-1.200" y="-6" width="2.400" height="3" transform="rotate(180)"/><rect x="-1.200" y="-6" width="2.400" height="3" transform="rotate(225)"/><rect x="-1.200" y="-6" width="2.400" height="3" transform="rotate(270)"/><rect x="-1.200" y="-6" width="2.400" height="3" transform="rotate(315)"/><circle r="1.700" fill="#2b2b2b"/></g><rect x="1125" y="170" width="152" height="20.500" fill="#565656" stroke="#3e3e3e"/><rect x="1179" y="171" width="45" height="19" fill="url(#btn)" stroke="#6a6a6a" stroke-width=".8"/><text x="1201" y="185.500" text-anchor="middle" fill="#e4e4e4">On</text><rect x="1124.500" y="193" width="158" height="39" fill="#555" stroke="#d9ad33"/><rect x="1125" y="193.500" width="152" height="16" fill="#2b2b2b"/><text x="1127" y="205" font-size="10.8" fill="#e8e8e8">Opacity Strength</text><g fill="none" stroke="#e4e4e4" stroke-width="1.500"><circle cx="1238.500" cy="204" r="2.800"/><path d="M1240.500 202V199.500Q1240.500 197 1243 197Q1245 197 1245 199"/><circle cx="1241.500" cy="204.500" r="0" /></g><path d="M1254.500 207.500L1249 201.500Q1247.500 198 1251 197.500Q1253.500 197.500 1254.500 200Q1255.500 197.500 1258 197.500Q1261.500 198 1260 201.500Z" fill="none" stroke="#e4e4e4" stroke-width="1.400"/><g transform="translate(1270 202.5)" fill="#e4e4e4"><circle r="4"/><rect x="-1.200" y="-6" width="2.400" height="3" transform="rotate(0)"/><rect x="-1.200" y="-6" width="2.400" height="3" transform="rotate(45)"/><rect x="-1.200" y="-6" width="2.400" height="3" transform="rotate(90)"/><rect x="-1.200" y="-6" width="2.400" height="3" transform="rotate(135)"/><rect x="-1.200" y="-6" width="2.400" height="3" transform="rotate(180)"/><rect x="-1.200" y="-6" width="2.400" height="3" transform="rotate(225)"/><rect x="-1.200" y="-6" width="2.400" height="3" transform="rotate(270)"/><rect x="-1.200" y="-6" width="2.400" height="3" transform="rotate(315)"/><circle r="1.700" fill="#2b2b2b"/></g><rect x="1126" y="210" width="21" height="21" fill="#686868"/><path d="M1132 217.500H1141L1136.500 224.500Z" fill="#f2f2f2"/><rect x="1152" y="218.500" width="5" height="1.800" fill="#111"/><rect x="1164" y="217.500" width="58" height="3" rx="1.500" fill="#3c3c3c"/><rect x="1217.500" y="213.500" width="5" height="12" rx="2.500" fill="#777" stroke="#333" stroke-width=".8"/><path d="M1224.500 219.500h5M1227 217v5" stroke="#111" stroke-width="1.600"/><text x="1273.500" y="224" text-anchor="end" font-size="10.4" fill="#7e7e7e">100.0%</text><rect x="1277" y="85" width="1" height="754" fill="#474747"/><rect x="1278" y="80" width="4" height="759" fill="#666"/></svg>
<div id="rtool" class="abs"><svg class="abs" style="left:0;top:0" width="40" height="759" viewBox="1282 80 40 759"><rect x="1285" y="83" width="35" height="3.500" fill="#474747"/><rect x="1288" y="158" width="28" height="1" fill="#484848"/><rect x="1288" y="341" width="28" height="1" fill="#484848"/><rect x="1288" y="377" width="28" height="1" fill="#484848"/><rect x="1290.700" y="93" width="1.400" height="22.500" fill="#eee"/><rect x="1294.500" y="94" width="16" height="4.500" fill="#8a8a8a"/><rect x="1294.500" y="101.500" width="13" height="4.500" fill="#8a8a8a"/><rect x="1294.500" y="109" width="18" height="4.500" fill="#8a8a8a"/><g transform="translate(1301 140.500)"><circle r="10" fill="none" stroke="#d6d6d6" stroke-width="1.600"/><circle r="7.300" fill="#d6d6d6"/><circle cx="0" cy="-.5" r="2" fill="#343434"/><rect x="-.8" y="0" width="1.600" height="6.500" fill="#343434"/></g><g transform="translate(1301 178)"><circle cx="-6" cy="-7.500" r="2.200" fill="#8a8a8a"/><path d="M-8.500 -4.500H-3.500L-2.500 3L-4 10H-5.500L-6 4L-7.500 10H-9.500L-8 3Z" fill="#e0e0e0"/><path d="M-3.500 -3L0 1" stroke="#8a8a8a" stroke-width="1.500"/><g transform="translate(3 -3) rotate(-48)"><rect x="-7" y="-2.300" width="13" height="4.600" fill="#d6d6d6"/><path d="M-7 -2.300L-11 0L-7 2.300Z" fill="#8a8a8a"/><rect x="6.500" y="-2.300" width="2.500" height="4.600" fill="#8a8a8a"/></g><rect x="3" y="4" width="2" height="2" fill="#aaa"/><rect x="7" y="4" width="2" height="2" fill="#aaa"/><rect x="7" y="8" width="2" height="2" fill="#aaa"/><rect x="3" y="8" width="2" height="2" fill="#777"/></g><g transform="translate(1301 214)"><circle cx="-4" cy="5" r="6" fill="#d6d6d6"/><circle cx="6" cy="-6" r="5.500" fill="none" stroke="#d6d6d6" stroke-width="1.300"/><path d="M0 0L7 -7" stroke="#d6d6d6" stroke-width="2.200"/><path d="M4 -9.500H9.500V-4Z" fill="#d6d6d6"/></g><g transform="translate(1301 250)"><path d="M-6.500 -9V9M-10 -5H-3M-6.500 1H-2M-6.500 8H0" stroke="#d6d6d6" stroke-width="1.600" fill="none"/><rect x="-8" y="-10" width="3.500" height="3.500" fill="#d6d6d6"/><rect x="-3" y="6" width="5" height="4" fill="#d6d6d6"/><rect x="-3" y="-1" width="4" height="4" fill="#d6d6d6"/><g transform="translate(4 -4) rotate(-48)"><rect x="-7" y="-2.300" width="13" height="4.600" fill="#d6d6d6"/><path d="M-7 -2.300L-11 0L-7 2.300Z" fill="#8a8a8a"/><rect x="6.500" y="-2.300" width="2.500" height="4.600" fill="#8a8a8a"/></g><rect x="5" y="5" width="2" height="2" fill="#aaa"/><rect x="9" y="5" width="2" height="2" fill="#aaa"/><rect x="9" y="9" width="2" height="2" fill="#aaa"/></g><g transform="translate(1302 286)"><path d="M-9.500 10.500Q-10 4 -7 0Q-4.500 -3 -5.500 -6Q-5.500 -10.500 -1 -11.500Q4 -12 6 -8.500Q7 -5.500 4.500 -3.500Q9.500 -1 10 4.500Q10 9 8 10.500Q0 12 -9.500 10.500Z" fill="#e0e0e0"/><path d="M-3.500 -4.500Q-2.500 -8.500 1.500 -8Q4 -7 3 -4.500" stroke="#343434" stroke-width="1.600" fill="none"/><path d="M-4.500 -4L-1 -3.500L-3.500 -1Z" fill="#343434"/><path d="M-2 3Q2 0 6 2" stroke="#343434" stroke-width="1" fill="none" opacity=".6"/></g><g transform="translate(1302 322)"><path d="M-9.500 10.500Q-10 4 -7 0Q-4.500 -3 -5.500 -6Q-5.500 -10.500 -1 -11.500Q4 -12 6 -8.500Q7 -5.500 4.500 -3.500Q9.500 -1 10 4.500Q10 9 8 10.500Q0 12 -9.500 10.500Z" fill="#e0e0e0"/><path d="M-3.500 -4.500Q-2.500 -8.500 1.500 -8Q4 -7 3 -4.500" stroke="#343434" stroke-width="1.600" fill="none"/><path d="M-4.500 -4L-1 -3.500L-3.500 -1Z" fill="#343434"/><path d="M-2 3Q2 0 6 2" stroke="#343434" stroke-width="1" fill="none" opacity=".6"/><circle cx="-.5" cy="6" r="3.200" fill="#343434"/><text x="-.4" y="8.100" font-size="5.500" font-weight="bold" fill="#eee" text-anchor="middle" font-family="Liberation Sans, sans-serif">P</text></g><g transform="translate(1301 359)" fill="none" stroke="#d6d6d6" stroke-width="1.300"><circle r="10.500"/><ellipse rx="5" ry="10.500"/><path d="M0 -10.500V10.500M-10.500 0H10.500M-9 -5.500H9M-9 5.500H9"/></g><g transform="translate(1305 355) rotate(-48)"><rect x="-6" y="-2.300" width="11" height="4.600" fill="#d6d6d6" stroke="#343434" stroke-width=".6"/><path d="M-6 -2.300L-10 0L-6 2.300Z" fill="#8a8a8a"/><rect x="5.500" y="-2.300" width="2.500" height="4.600" fill="#8a8a8a"/></g><g transform="translate(1301 396.500)"><rect x="1" y="-11.500" width="8.500" height="23" fill="#e4e4e4"/><path d="M1 -8.500A8.500 8.500 0 0 0 1 8.500Z" fill="#b4b4b4"/><path d="M1 -8.500A8.500 8.500 0 0 1 1 8.500Z" fill="#343434"/><path d="M-6.500 0L-1.500 -4V4Z" fill="#343434"/><rect x="-2" y="-1" width="5" height="2" fill="#343434"/><path d="M1 -8.500A8.500 8.500 0 0 1 1 8.500" fill="none" stroke="#ccc" stroke-width=".6"/></g></svg></div>
</body></html>
